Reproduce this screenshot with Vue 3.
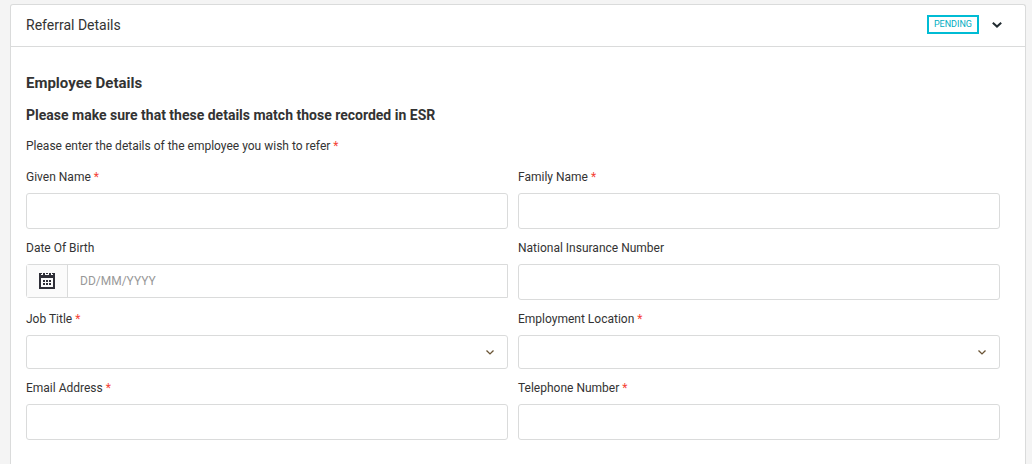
<script setup>
import { ref } from 'vue'

const open = ref(true)
const fields = [
  { id: 'given-name', label: 'Given Name', required: true, type: 'text' },
  { id: 'family-name', label: 'Family Name', required: true, type: 'text' },
  { id: 'date-of-birth', label: 'Date Of Birth', required: false, type: 'date' },
  { id: 'ni-number', label: 'National Insurance Number', required: false, type: 'text' },
  { id: 'job-title', label: 'Job Title', required: true, type: 'select' },
  { id: 'location', label: 'Employment Location', required: true, type: 'select' },
  { id: 'email', label: 'Email Address', required: true, type: 'text' },
  { id: 'telephone', label: 'Telephone Number', required: true, type: 'text' }
]
</script>

<template>
  <main class="page">
    <section class="card">
      <header class="card-header">
        <h1 class="title">Referral Details</h1>
        <span class="status">PENDING</span>
        <button class="toggle" type="button" aria-label="Toggle referral details" :aria-expanded="open" @click="open = !open">
          <svg width="10" height="6" viewBox="0 0 10 6" fill="none" stroke="#222c31" stroke-width="2">
            <path d="M.8.8 5 4.6 9.2.8" />
          </svg>
        </button>
      </header>
      <form v-if="open" class="card-body" @submit.prevent>
        <h2 class="heading main-heading">Employee Details</h2>
        <h3 class="heading">Please make sure that these details match those recorded in ESR</h3>
        <p class="intro">Please enter the details of the employee you wish to refer <span class="required">*</span></p>
        <div class="grid">
          <div v-for="field in fields" :key="field.id" class="field">
            <label class="label" :for="field.id">{{ field.label }} <span v-if="field.required" class="required">*</span></label>
            <div v-if="field.type === 'date'" class="date">
              <button class="calendar" type="button" aria-label="Choose date">
                <svg width="16" height="16" viewBox="0 0 16 16" fill="#2f2f38" shape-rendering="crispEdges">
                  <path fill-rule="evenodd" d="M0 0H2V2H4V0H6V2H10V0H12V2H14V0H16V16H0ZM2 5V14H14V5Z" />
                  <path d="M2 0H3V1H2ZM7 0H9V1H7ZM13 0H14V1H13ZM4 7H6V9H4ZM7 7H9V9H7ZM10 7H12V9H10ZM4 10H6V12H4ZM7 10H9V12H7ZM10 10H12V12H10Z" />
                </svg>
              </button>
              <input :id="field.id" class="date-input" type="text" placeholder="DD/MM/YYYY" />
            </div>
            <div v-else-if="field.type === 'select'" class="select-wrap">
              <select :id="field.id" class="control select"><option value=""></option></select>
              <svg class="arrow" width="8" height="5" viewBox="0 0 8 5" fill="none" stroke="#6b5536" stroke-width="1.4">
                <path d="M.5.6 4 3.9 7.5.6" />
              </svg>
            </div>
            <input v-else :id="field.id" class="control" type="text" />
          </div>
        </div>
      </form>
    </section>
  </main>
</template>

<style>
body {
  background: #f4f4f4;
}
</style>

<style scoped>
.page {
  box-sizing: border-box;
  min-height: 100vh;
  padding: 4px 6px 0 10px;
  display: flex;
  font-family: Roboto, "Liberation Sans", sans-serif;
  font-size: 12px;
  color: #333;
}
.card {
  flex: 1;
  background: #fff;
  border: 1px solid #dadbdb;
  border-bottom: 0;
  border-radius: 3px 3px 0 0;
}
.card-header {
  display: flex;
  align-items: center;
  height: 39px;
  padding: 0 19px 2px 15px;
  border-bottom: 1px solid #dadbdb;
}
.title {
  flex: 1;
  margin: 0;
  font-size: 14px;
  font-weight: 400;
  line-height: 20px;
}
.status {
  padding: 0 5px;
  border: 2px solid #00bcd4;
  font-size: 9px;
  line-height: 15px;
  color: #00acc1;
}
.toggle {
  display: flex;
  align-items: center;
  justify-content: center;
  width: 18px;
  height: 20px;
  margin-left: 9px;
  padding: 0;
  border: 0;
  background: none;
}
.card-body {
  padding: 26px 25px 23px 15px;
}
.heading {
  margin: 0 0 12px;
  font-size: 14px;
  font-weight: 700;
  line-height: 20px;
}
.main-heading {
  font-size: 15px;
}
.intro {
  margin: 0 0 13px;
  line-height: 18px;
}
.required {
  color: #f44336;
}
.grid {
  display: grid;
  grid-template-columns: 1fr 1fr;
  gap: 10px;
}
.field {
  min-width: 0;
}
.label {
  display: block;
  margin-bottom: 7px;
  line-height: 18px;
}
.control {
  display: block;
  box-sizing: border-box;
  width: 100%;
  height: 36px;
  padding: 0 12px;
  border: 1px solid #dadbdb;
  border-radius: 3px;
  background: #fff;
  font: inherit;
  color: inherit;
}
.select-wrap {
  position: relative;
}
.select {
  height: 34px;
  appearance: none;
}
.arrow {
  position: absolute;
  top: 15px;
  right: 14px;
  pointer-events: none;
}
.date {
  display: flex;
  box-sizing: border-box;
  height: 34px;
  border: 1px solid #dadbdb;
  border-radius: 3px 0 0 3px;
}
.calendar {
  display: flex;
  align-items: center;
  justify-content: center;
  box-sizing: border-box;
  width: 41px;
  padding: 0;
  border: 0;
  border-right: 1px solid #dadbdb;
  background: #fbfbfb;
}
.date-input {
  flex: 1;
  min-width: 0;
  padding: 0 12px;
  border: 0;
  background: #fff;
  font: inherit;
  color: inherit;
}
.date-input::placeholder {
  color: #999;
}
</style>
